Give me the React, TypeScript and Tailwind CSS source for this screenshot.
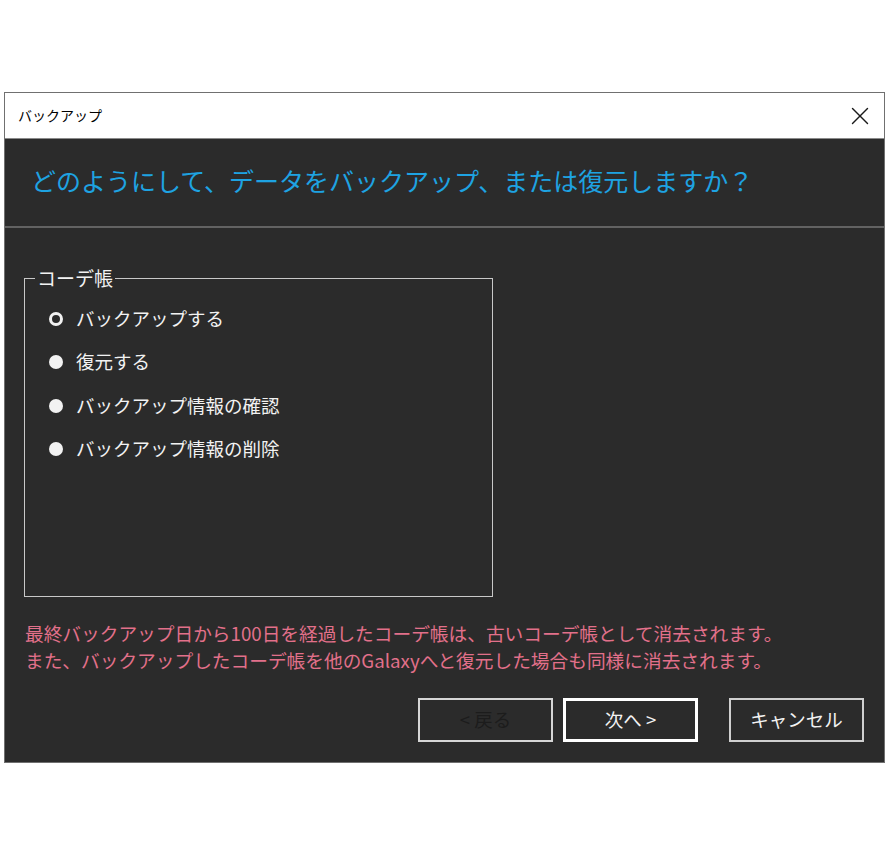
import { X } from "lucide-react";

const options = ["バックアップする", "復元する", "バックアップ情報の確認", "バックアップ情報の削除"];

export default function App() {
  return (
    <div
      className="w-[890px] h-[854px] bg-white pt-[92px] pl-[4px]"
      style={{ fontFamily: '"Noto Sans CJK JP", "Noto Sans", sans-serif' }}
    >
      <div className="w-[881px] border border-[#707070] flex flex-col">
        {/* Title bar */}
        <div className="h-[46px] bg-white border-b border-[#8a8a8a] flex items-center justify-between pl-[13px] pr-[9px]">
          <span className="text-[14px] text-black">バックアップ</span>
          <X className="w-[30px] h-[30px] text-[#1a1a1a]" strokeWidth={1.1} />
        </div>

        {/* Body */}
        <div className="bg-[#2b2b2b] flex flex-col">
          <div className="pt-[26px] pb-[31px] pl-[26px]">
            <h1 className="text-[25px] leading-[30px] text-[#1ea3e2]">
              どのようにして、データをバックアップ、または復元しますか？
            </h1>
          </div>
          <div className="h-[2px] bg-[#626262]" />

          <fieldset className="ml-[19px] mt-[38px] w-[469px] h-[331px] border border-[#c8c8c8]">
            <legend className="ml-[10px] px-[2px] text-[19px] leading-[24px] text-[#f2f2f2]">コーデ帳</legend>
            <div className="pt-[7px] flex flex-col">
              {options.map((o, i) => (
                <div key={o} className="h-[43.5px] flex items-center pl-[24px] gap-[13px]">
                  {i === 0 ? (
                    <span className="w-[14px] h-[14px] rounded-full border-[3px] border-[#f2f2f2] bg-[#2b2b2b]" />
                  ) : (
                    <span className="w-[14px] h-[14px] rounded-full bg-[#f2f2f2]" />
                  )}
                  <span className="text-[18.5px] text-[#f2f2f2]">{o}</span>
                </div>
              ))}
            </div>
          </fieldset>

          <div className="ml-[20px] mt-[21.5px] text-[18.7px] leading-[27px] text-[#e2708a]">
            <p>最終バックアップ日から100日を経過したコーデ帳は、古いコーデ帳として消去されます。</p>
            <p>また、バックアップしたコーデ帳を他のGalaxyへと復元した場合も同様に消去されます。</p>
          </div>

          <div className="mt-[25.5px] pb-[20px] pr-[20px] flex justify-end">
            <button className="w-[135px] h-[44px] border-2 border-[#d6d6d6] text-[18.5px] text-[#1c1c1c]">
              &lt; 戻る
            </button>
            <button className="ml-[10px] w-[135px] h-[44px] border-[3px] border-white text-[18.5px] text-[#f2f2f2]">
              次へ &gt;
            </button>
            <button className="ml-[31px] w-[135px] h-[44px] border-2 border-[#d0d0d0] text-[18.5px] text-[#f2f2f2]">
              キャンセル
            </button>
          </div>
        </div>
      </div>
    </div>
  );
}
